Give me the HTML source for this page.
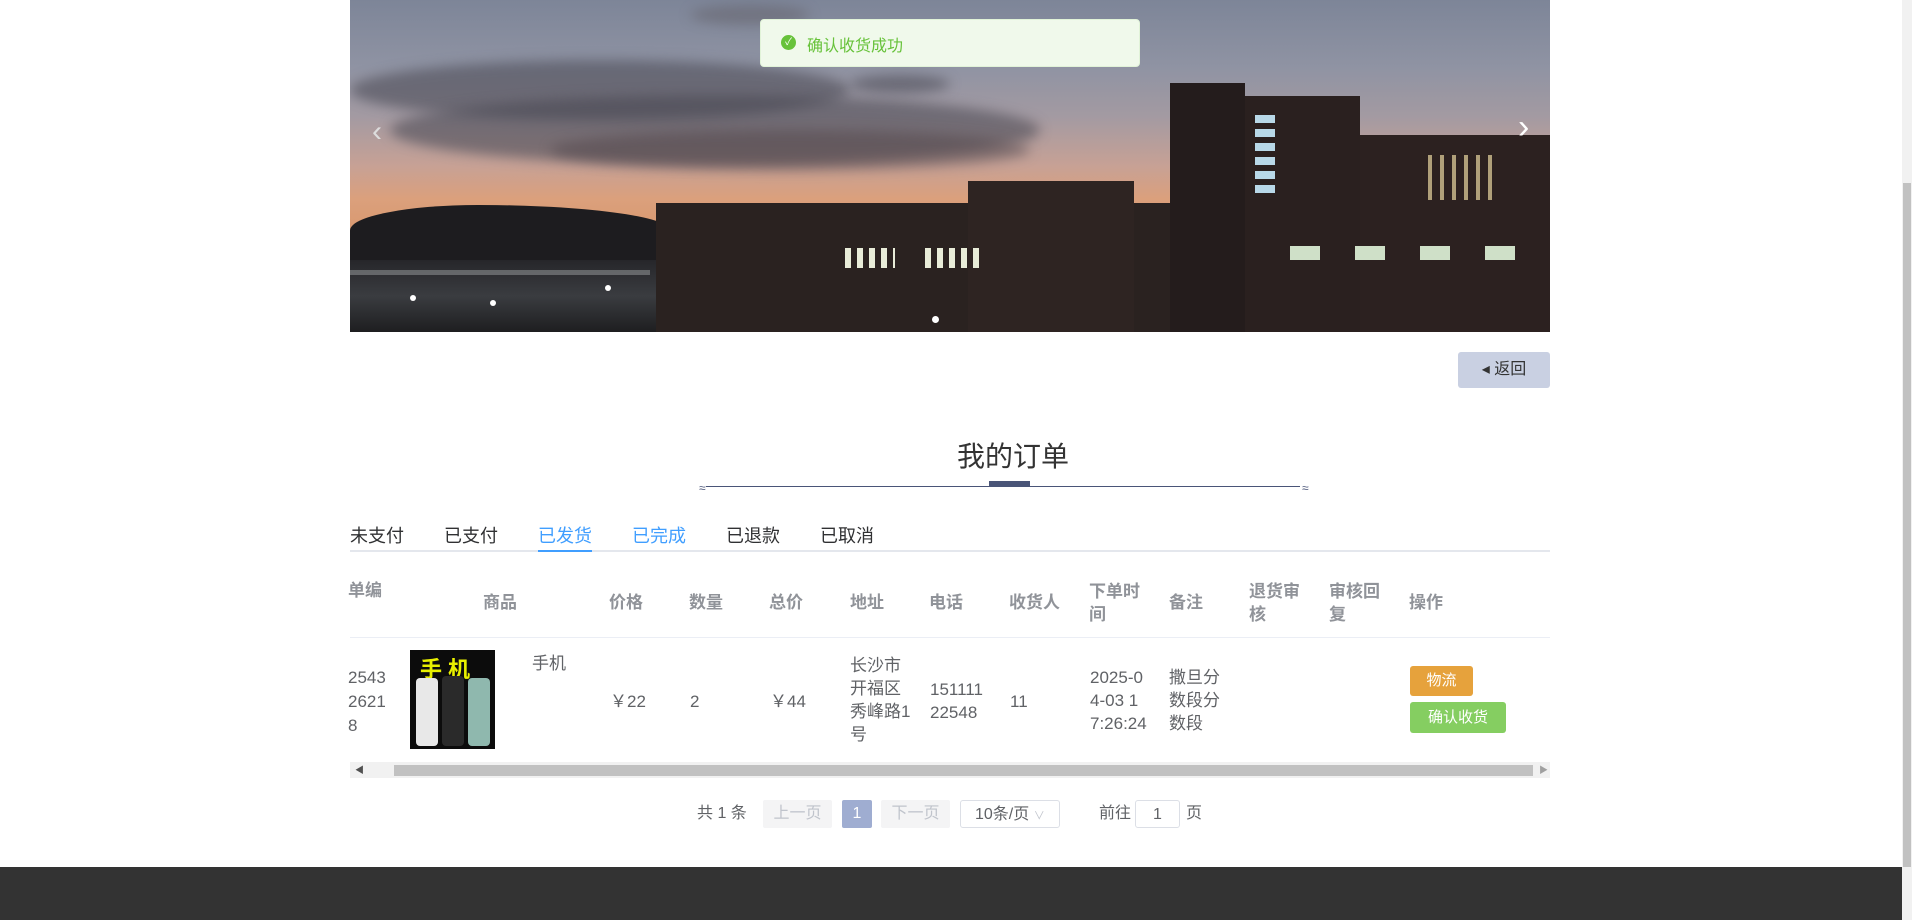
<!DOCTYPE html>
<html><head><meta charset="utf-8"><style>
*{margin:0;padding:0;box-sizing:border-box}
body{width:1912px;height:920px;overflow:hidden;background:#fff;font-family:"Liberation Sans","Noto Sans CJK SC",sans-serif;position:relative;color:#606266}
.a{position:absolute}
.banner{left:350px;top:0;width:1200px;height:332px;overflow:hidden;background:linear-gradient(180deg,#7d8598 0%,#8f93a3 20%,#a39aa2 35%,#c7a195 50%,#dba07c 60%,#d99a72 68%,#b98068 75%)}
.cl{position:absolute;border-radius:50%;background:rgba(70,70,80,.55);filter:blur(6px)}
.bd{position:absolute;background:#2a2220}
.tab{position:absolute;top:522px;font-size:18px;color:#303133}
.hd{position:absolute;top:590px;font-size:17px;font-weight:bold;color:#909399;line-height:23px}
.cell{position:absolute;font-size:17px;color:#606266;line-height:23px}
.pg{position:absolute;top:800px;height:28px;font-size:16px;line-height:28px;text-align:center}
</style></head><body>
<div class="a banner">
 <div class="cl" style="left:0;top:60px;width:500px;height:60px"></div>
 <div class="cl" style="left:40px;top:95px;width:650px;height:70px"></div>
 <div class="cl" style="left:200px;top:130px;width:480px;height:40px;background:rgba(80,70,75,.5)"></div>
 <div class="cl" style="left:340px;top:5px;width:120px;height:20px;background:rgba(90,85,90,.4)"></div>
 <div class="cl" style="left:500px;top:75px;width:100px;height:18px"></div>
 <div class="bd" style="left:0;top:205px;width:320px;height:127px;background:#1d1c1f;border-radius:40% 60% 0 0/20% 20% 0 0"></div>
 <div class="a" style="left:0;top:260px;width:320px;height:72px;background:linear-gradient(180deg,#26262a,#3a3c40 50%,#1e1e20)"></div>
 <div class="a" style="left:0;top:270px;width:300px;height:5px;background:#8a8e90;opacity:.6"></div>
 <div class="a" style="left:60px;top:295px;width:6px;height:6px;border-radius:50%;background:#fff"></div>
 <div class="a" style="left:140px;top:300px;width:6px;height:6px;border-radius:50%;background:#fff"></div>
 <div class="a" style="left:255px;top:285px;width:6px;height:6px;border-radius:50%;background:#fff"></div>
 <div class="bd" style="left:306px;top:203px;width:894px;height:129px"></div>
 <div class="bd" style="left:618px;top:181px;width:166px;height:151px;background:#2e2422"></div>
 <div class="bd" style="left:820px;top:83px;width:75px;height:249px;background:#241c1c"></div>
 <div class="bd" style="left:895px;top:96px;width:115px;height:236px;background:#2a201f"></div>
 <div class="bd" style="left:1010px;top:135px;width:190px;height:197px;background:#2c2120"></div>
 <div class="a" style="left:905px;top:115px;width:20px;height:80px;background:repeating-linear-gradient(180deg,#b8d8e8 0 8px,#2a201f 8px 14px)"></div>
 <div class="a" style="left:1078px;top:155px;width:70px;height:45px;background:repeating-linear-gradient(90deg,#e8d7a0 0 4px,transparent 4px 12px);opacity:.7"></div>
 <div class="a" style="left:495px;top:248px;width:50px;height:20px;background:repeating-linear-gradient(90deg,#e8ecd8 0 6px,transparent 6px 12px)"></div>
 <div class="a" style="left:575px;top:248px;width:60px;height:20px;background:repeating-linear-gradient(90deg,#e8ecd8 0 6px,transparent 6px 12px)"></div>
 <div class="a" style="left:940px;top:246px;width:30px;height:14px;background:#cfe0c8"></div>
 <div class="a" style="left:1005px;top:246px;width:30px;height:14px;background:#cfe0c8"></div>
 <div class="a" style="left:1070px;top:246px;width:30px;height:14px;background:#cfe0c8"></div>
 <div class="a" style="left:1135px;top:246px;width:30px;height:14px;background:#cfe0c8"></div>
 <div class="a" style="left:22px;top:115px;color:#ddd;font-size:30px">‹</div>
 <div class="a" style="left:1168px;top:108px;color:#fff;font-size:34px">›</div>
 <div class="a" style="left:582px;top:316px;width:7px;height:7px;border-radius:50%;background:#fff"></div>
</div>
<div class="a" style="left:760px;top:19px;width:380px;height:48px;background:#f0f9eb;border:1px solid #e1f3d8;border-radius:4px"></div>
<div class="a" style="left:781px;top:35px;width:15px;height:15px;border-radius:50%;background:#67c23a;color:#fff;font-size:10px;text-align:center;line-height:15px">✓</div>
<div class="a" style="left:807px;top:32px;font-size:16px;color:#67c23a">确认收货成功</div>

<div class="a" style="left:1458px;top:352px;width:92px;height:36px;background:#c9d0e2;border-radius:3px;font-size:16px;line-height:36px;color:#333;text-align:center">◂ 返回</div>

<div class="a" style="left:957px;top:435px;font-size:28px;color:#333">我的订单</div>
<div class="a" style="left:706px;top:486px;width:594px;height:1px;background:#4a5578"></div>
<div class="a" style="left:699px;top:481px;font-size:12px;color:#4a5578">≈</div>
<div class="a" style="left:1302px;top:481px;font-size:12px;color:#4a5578">≈</div>
<div class="a" style="left:989px;top:481px;width:41px;height:6px;background:#4a5578"></div>

<div class="tab" style="left:350px">未支付</div>
<div class="tab" style="left:444px">已支付</div>
<div class="tab" style="left:538px;color:#409eff">已发货</div>
<div class="tab" style="left:632px;color:#409eff">已完成</div>
<div class="tab" style="left:726px">已退款</div>
<div class="tab" style="left:820px">已取消</div>
<div class="a" style="left:350px;top:550px;width:1200px;height:2px;background:#e4e7ed"></div>
<div class="a" style="left:538px;top:550px;width:54px;height:2px;background:#409eff"></div>

<div class="hd" style="left:348px;top:579px">单编</div>
<div class="hd" style="left:483px;top:591px">商品</div>
<div class="hd" style="left:609px;top:591px">价格</div>
<div class="hd" style="left:689px;top:591px">数量</div>
<div class="hd" style="left:769px;top:591px">总价</div>
<div class="hd" style="left:850px;top:591px">地址</div>
<div class="hd" style="left:929px;top:591px">电话</div>
<div class="hd" style="left:1009px;top:591px">收货人</div>
<div class="hd" style="left:1089px;top:580px">下单时<br>间</div>
<div class="hd" style="left:1169px;top:591px">备注</div>
<div class="hd" style="left:1249px;top:580px">退货审<br>核</div>
<div class="hd" style="left:1329px;top:580px">审核回<br>复</div>
<div class="hd" style="left:1409px;top:591px">操作</div>
<div class="a" style="left:350px;top:637px;width:1200px;height:1px;background:#ebeef5"></div>

<div class="cell" style="left:348px;top:666px;line-height:24px">2543<br>2621<br>8</div>
<div class="a" style="left:410px;top:650px;width:85px;height:99px;background:#0c0c0c">
 <div class="a" style="left:10px;top:2px;color:#e8f000;font-size:22px;font-weight:bold;letter-spacing:6px">手机</div>
 <div class="a" style="left:6px;top:28px;width:22px;height:68px;background:#e8e8e8;border-radius:4px"></div>
 <div class="a" style="left:32px;top:26px;width:22px;height:70px;background:#2a2a2a;border-radius:4px"></div>
 <div class="a" style="left:58px;top:28px;width:22px;height:68px;background:#8fb8ae;border-radius:4px"></div>
</div>
<div class="cell" style="left:532px;top:652px">手机</div>
<div class="cell" style="left:610px;top:690px">￥22</div>
<div class="cell" style="left:690px;top:690px">2</div>
<div class="cell" style="left:770px;top:690px">￥44</div>
<div class="cell" style="left:850px;top:654px">长沙市<br>开福区<br>秀峰路1<br>号</div>
<div class="cell" style="left:930px;top:678px">151111<br>22548</div>
<div class="cell" style="left:1010px;top:690px">11</div>
<div class="cell" style="left:1090px;top:666px">2025-0<br>4-03 1<br>7:26:24</div>
<div class="cell" style="left:1169px;top:666px">撒旦分<br>数段分<br>数段</div>
<div class="a" style="left:1410px;top:666px;width:63px;height:30px;background:#e6a23c;border-radius:3px;color:#fff;font-size:15px;line-height:30px;text-align:center">物流</div>
<div class="a" style="left:1410px;top:702px;width:96px;height:31px;background:#85ce61;border-radius:3px;color:#fff;font-size:15px;line-height:31px;text-align:center">确认收货</div>

<div class="a" style="left:350px;top:762px;width:1200px;height:16px;background:#f1f1f1"></div>
<div class="a" style="left:394px;top:765px;width:1139px;height:11px;background:#c1c1c1"></div>
<div class="a" style="left:355px;top:763px;font-size:9px;color:#505050">◀</div>
<div class="a" style="left:1539px;top:763px;font-size:9px;color:#a0a0a0">▶</div>

<div class="pg" style="left:697px;color:#606266">共 1 条</div>
<div class="pg" style="left:763px;width:69px;background:#f4f4f5;color:#c0c4cc;border-radius:2px">上一页</div>
<div class="pg" style="left:842px;width:30px;background:#9fadd1;color:#fff;border-radius:2px">1</div>
<div class="pg" style="left:881px;width:69px;background:#f4f4f5;color:#c0c4cc;border-radius:2px">下一页</div>
<div class="pg" style="left:960px;width:100px;border:1px solid #dcdfe6;border-radius:3px;color:#606266;text-align:left;padding-left:14px">10条/页 <span style="color:#c0c4cc;font-size:11px">∨</span></div>
<div class="pg" style="left:1099px;color:#606266">前往</div>
<div class="pg" style="left:1135px;width:45px;border:1px solid #dcdfe6;border-radius:3px;color:#606266">1</div>
<div class="pg" style="left:1186px;color:#606266">页</div>

<div class="a" style="left:0;top:867px;width:1902px;height:53px;background:#333"></div>
<div class="a" style="left:1902px;top:0;width:10px;height:920px;background:#f1f1f1"></div>
<div class="a" style="left:1903px;top:183px;width:8px;height:684px;background:#c1c1c1"></div>
</body></html>
